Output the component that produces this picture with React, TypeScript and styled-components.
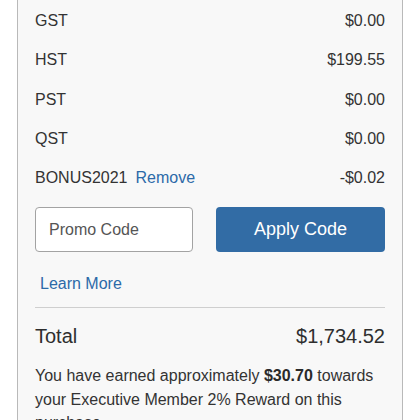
import React from "react";
import styled, { createGlobalStyle } from "styled-components";

const Global = createGlobalStyle`
  html, body { margin: 0; padding: 0; background: #ffffff; }
  body { font-family: "Liberation Sans", Arial, Helvetica, sans-serif; color: #333333; overflow: hidden; }
`;

const Page = styled.div`
  width: 420px;
  height: 420px;
  overflow: hidden;
  padding: 0 17px;
  box-sizing: border-box;
`;

const Card = styled.section`
  margin-top: -20px;
  background: #f8f8f8;
  border: 1px solid #b9b9b9;
  padding: 20.4px 17px 40px;
  display: flex;
  flex-direction: column;
`;

const Row = styled.div`
  display: flex;
  justify-content: space-between;
  align-items: center;
  height: 39.25px;
  font-size: 16px;
  color: #333333;
`;

const Label = styled.span`
  display: flex;
  align-items: center;
  gap: 8px;
`;

const Link = styled.a`
  color: #2c6aa8;
  text-decoration: none;
  font-size: 16px;
  cursor: pointer;
`;

const PromoForm = styled.div`
  display: grid;
  grid-template-columns: 158px 169px;
  justify-content: space-between;
  margin-top: 9.5px;
`;

const PromoInput = styled.input`
  height: 45px;
  box-sizing: border-box;
  border: 1px solid #a3a3a3;
  border-radius: 4px;
  background: #ffffff;
  padding: 0 13px;
  font-family: inherit;
  font-size: 16px;
  color: #333333;
  outline: none;
  &::placeholder { color: #555555; }
`;

const ApplyButton = styled.button`
  height: 45px;
  border: none;
  border-radius: 4px;
  background: #326ca5;
  color: #ffffff;
  font-family: inherit;
  font-size: 18px;
  cursor: pointer;
`;

const LearnMoreRow = styled.div`
  padding: 23px 0 14px 5px;
  line-height: 18px;
`;

const Divider = styled.hr`
  margin: 0;
  border: none;
  border-top: 1px solid #cfcfcf;
`;

const TotalRow = styled.div`
  display: flex;
  justify-content: space-between;
  align-items: center;
  font-size: 20px;
  line-height: 23px;
  margin-top: 17px;
  color: #2e2e2e;
`;

const Note = styled.p`
  margin: 16px 0 0;
  font-size: 16px;
  line-height: 23.5px;
  color: #333333;
  b { font-weight: 700; color: #2a2a2a; }
`;

const taxes: [string, string][] = [
  ["GST", "$0.00"],
  ["HST", "$199.55"],
  ["PST", "$0.00"],
  ["QST", "$0.00"],
];

export default function App() {
  return (
    <Page>
      <Global />
      <Card>
        {taxes.map(([k, v]) => (
          <Row key={k}>
            <span>{k}</span>
            <span>{v}</span>
          </Row>
        ))}
        <Row>
          <Label>
            BONUS2021 <Link>Remove</Link>
          </Label>
          <span>-$0.02</span>
        </Row>
        <PromoForm>
          <PromoInput placeholder="Promo Code" />
          <ApplyButton>Apply Code</ApplyButton>
        </PromoForm>
        <LearnMoreRow>
          <Link>Learn More</Link>
        </LearnMoreRow>
        <Divider />
        <TotalRow>
          <span>Total</span>
          <span>$1,734.52</span>
        </TotalRow>
        <Note>
          You have earned approximately <b>$30.70</b> towards your Executive Member 2% Reward on this purchase.
        </Note>
      </Card>
    </Page>
  );
}
